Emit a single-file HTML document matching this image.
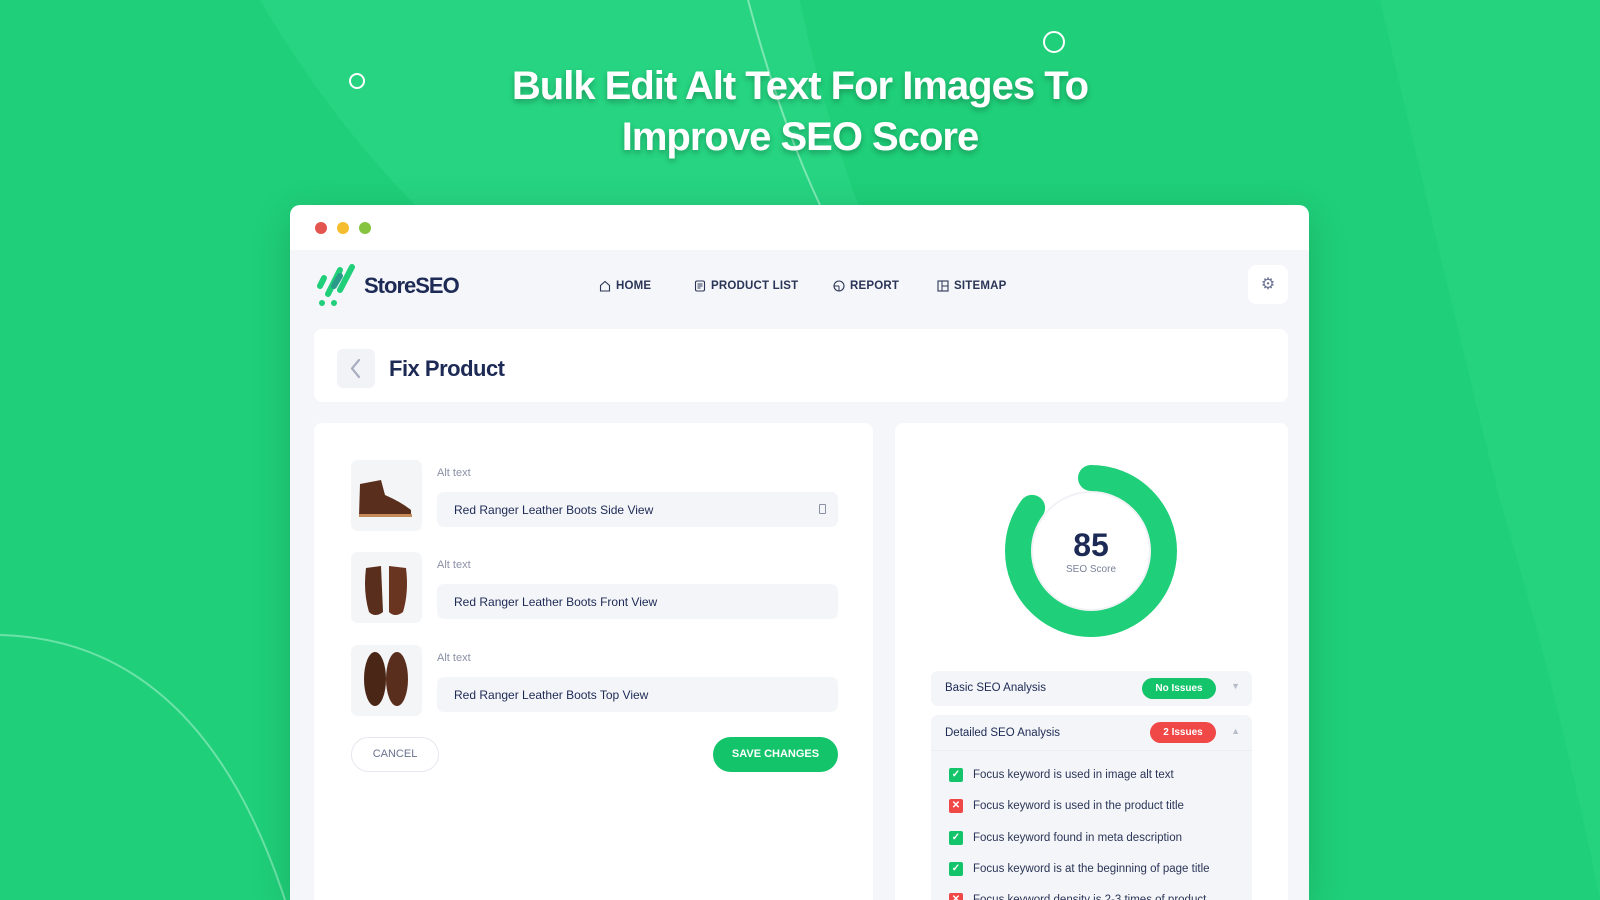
<!DOCTYPE html>
<html><head><meta charset="utf-8"><style>
*{margin:0;padding:0;box-sizing:border-box}
html,body{width:1600px;height:900px;overflow:hidden}
body{position:relative;background:#1fcf79;font-family:"Liberation Sans",sans-serif;color:#1d2a55}
.abs{position:absolute}
h1{position:absolute;left:0;width:1600px;top:61px;text-align:center;color:#fff;font-size:40px;line-height:51px;font-weight:bold;text-shadow:0 3px 6px rgba(0,0,0,.25);letter-spacing:-1px}
.win{position:absolute;left:290px;top:205px;width:1019px;height:695px;background:#fff;border-radius:10px 10px 0 0;box-shadow:0 10px 40px rgba(0,0,0,.15)}
.inner{position:absolute;left:290px;top:250px;width:1019px;height:650px;background:#f5f6f9}
.dot{position:absolute;width:12px;height:12px;border-radius:50%;top:222px}
.nav{position:absolute;top:279px;height:14px;line-height:14px;font-size:11.5px;font-weight:bold;color:#2a3557;letter-spacing:.2px;display:flex;align-items:center;gap:5px}
.nav svg{flex:none}
.card{position:absolute;background:#fff;border-radius:8px}
.lbl{position:absolute;left:437px;font-size:11px;color:#8a90a6}
.inp{position:absolute;left:437px;width:401px;height:35px;background:#f4f5f8;border-radius:7px;font-size:12px;padding:11px 17px;color:#1d2a55}
.th{position:absolute;left:351px;width:71px;height:71px;background:#f4f5f7;border-radius:7px}
.row{position:absolute;left:931px;width:321px;background:#f4f5f8;border-radius:7px;font-size:11.5px}
.badge{position:absolute;right:36px;top:7px;height:21px;border-radius:11px;color:#fff;font-size:10px;font-weight:bold;text-align:center;line-height:21px}
.it{position:absolute;left:949px;font-size:11.5px;color:#2a3557;white-space:nowrap}
.cb{display:inline-block;width:14px;height:14px;border-radius:2px;vertical-align:middle;margin-right:10px;color:#fff;font-size:10px;text-align:center;line-height:14px;font-weight:bold}
</style></head><body>
<svg class="abs" style="left:0;top:0" width="1600" height="900">
<path d="M260 0 Q330 120 420 210 L860 210 Q820 100 800 0Z" fill="#2ad684" opacity=".7"/>
<path d="M1380 0 Q1450 300 1500 500 Q1560 700 1600 900 L1600 0Z" fill="#2ad684" opacity=".6"/>
<path d="M0 635 Q200 640 285 900" stroke="#9ff0c7" stroke-width="2" fill="none" opacity=".6"/>
<path d="M748 0 Q780 120 820 205" stroke="#9ff0c7" stroke-width="2" fill="none" opacity=".7"/>
<circle cx="357" cy="81" r="7" stroke="#fff" stroke-width="2" fill="none"/>
<circle cx="1054" cy="42" r="10" stroke="#fff" stroke-width="2" fill="none"/>
</svg>
<h1>Bulk Edit Alt Text For Images To<br>Improve SEO Score</h1>
<div class="win"></div>
<div class="inner"></div>
<div class="dot" style="left:315px;background:#e5554f"></div>
<div class="dot" style="left:337px;background:#f5bd2e"></div>
<div class="dot" style="left:359px;background:#86c440"></div>
<svg class="abs" style="left:314px;top:264px" width="48" height="44"><g stroke-linecap="round" stroke-width="6"><line x1="6" y1="22" x2="10" y2="14" stroke="#1fcf79"/><line x1="14" y1="30" x2="26" y2="6" stroke="#1fcf79"/><line x1="26" y1="26" x2="38" y2="3" stroke="#1fcf79"/><line x1="20" y1="22" x2="26" y2="12" stroke="#2a9a8a"/></g><circle cx="8" cy="39" r="3" fill="#1fcf79"/><circle cx="20" cy="39" r="3" fill="#1fcf79"/></svg>
<div class="abs" style="left:364px;top:273px;font-size:22px;font-weight:bold;color:#1d2a55;letter-spacing:-1px">StoreSEO</div>
<div class="nav" style="left:599px"><svg width="12" height="12"><path d="M1.5 11V5.5L6 1.5l4.5 4V11z" fill="none" stroke="#2a3557" stroke-width="1.1"/></svg>HOME</div>
<div class="nav" style="left:694px"><svg width="12" height="12"><rect x="1.5" y="1" width="9" height="10" rx="1.5" fill="none" stroke="#2a3557" stroke-width="1.1"/><path d="M3.5 4h5M3.5 6h5M3.5 8h3" stroke="#2a3557"/></svg>PRODUCT LIST</div>
<div class="nav" style="left:833px"><svg width="12" height="12"><circle cx="6" cy="6" r="5" fill="none" stroke="#2a3557" stroke-width="1.1"/><path d="M6 6V11M6 6H1" stroke="#2a3557"/></svg>REPORT</div>
<div class="nav" style="left:937px"><svg width="12" height="12"><rect x="1" y="1" width="10" height="10" fill="none" stroke="#2a3557" stroke-width="1.1"/><path d="M5 1V11M5 6H11" stroke="#2a3557"/></svg>SITEMAP</div>
<div class="card" style="left:1248px;top:265px;width:40px;height:39px;text-align:center;line-height:39px;color:#6b7290;font-size:16px">⚙</div>
<div class="card" style="left:314px;top:329px;width:974px;height:73px"></div>
<div class="abs" style="left:337px;top:349px;width:38px;height:39px;background:#f2f3f7;border-radius:6px"><svg width="38" height="39"><path d="M22 11l-7 8.5 7 8.5" fill="none" stroke="#a8adc0" stroke-width="2.2" stroke-linecap="round"/></svg></div>
<div class="abs" style="left:389px;top:356px;font-size:22px;font-weight:bold;color:#1d2a55;letter-spacing:-.5px">Fix Product</div>
<div class="card" style="left:314px;top:423px;width:559px;height:477px;border-radius:8px 8px 0 0"></div>
<div class="card" style="left:895px;top:423px;width:393px;height:477px;border-radius:8px 8px 0 0"></div>
<div class="th" style="top:460px"><svg width="71" height="71"><path d="M9 24 L30 20 L34 35 Q50 42 60 50 L60 56 L8 56 Z" fill="#5a2e1c"/><rect x="8" y="54" width="53" height="3" fill="#c48a5a"/></svg></div>
<div class="th" style="top:552px"><svg width="71" height="71"><path d="M15 16 L30 14 L32 60 Q24 66 18 60 Q12 40 15 16Z" fill="#5a2e1c"/><path d="M38 14 L55 16 Q58 40 52 60 Q44 66 38 60Z" fill="#6a3520"/></svg></div>
<div class="th" style="top:645px"><svg width="71" height="71"><ellipse cx="24" cy="34" rx="11" ry="27" fill="#4a2616"/><ellipse cx="46" cy="34" rx="11" ry="27" fill="#5a2e1c"/></svg></div>
<div class="lbl" style="top:467px">Alt text</div>
<div class="inp" style="top:492px">Red Ranger Leather Boots Side View<span style="position:absolute;right:12px;top:12px;width:7px;height:10px;border:1px solid #8a90a6;border-radius:1px"></span></div>
<div class="lbl" style="top:559px">Alt text</div>
<div class="inp" style="top:584px">Red Ranger Leather Boots Front View</div>
<div class="lbl" style="top:652px">Alt text</div>
<div class="inp" style="top:677px">Red Ranger Leather Boots Top View</div>
<div class="abs" style="left:351px;top:737px;width:88px;height:35px;border:1.5px solid #e6e8ef;border-radius:18px;font-size:11px;color:#6b7290;text-align:center;line-height:32px">CANCEL</div>
<div class="abs" style="left:713px;top:737px;width:125px;height:35px;background:#14c46a;border-radius:18px;font-size:11px;color:#fff;font-weight:bold;text-align:center;line-height:35px">SAVE CHANGES</div>
<svg class="abs" style="left:1001px;top:461px" width="180" height="180"><circle cx="90" cy="90" r="86" fill="#f1f2f6"/><circle cx="90" cy="90" r="73" fill="none" stroke="#fff" stroke-width="26"/><circle cx="90" cy="90" r="73" fill="none" stroke="#1fcf79" stroke-width="26" stroke-linecap="round" stroke-dasharray="390 459" transform="rotate(-90 90 90)"/><circle cx="90" cy="90" r="58" fill="#fff"/></svg>
<div class="abs" style="left:1041px;top:527px;width:100px;text-align:center;font-size:32px;font-weight:bold;color:#1d2a55">85</div>
<div class="abs" style="left:1041px;top:564px;width:100px;text-align:center;font-size:10px;color:#7a8199">SEO Score</div>
<div class="row" style="top:671px;height:35px"><span class="abs" style="left:14px;top:11px">Basic SEO Analysis</span><span class="badge" style="width:74px;background:#14c46a">No Issues</span><span class="abs" style="right:12px;top:10px;color:#b8bdcc;font-size:9px">▼</span></div>
<div class="row" style="top:715px;height:185px;border-radius:7px 7px 0 0"><span class="abs" style="left:14px;top:12px">Detailed SEO Analysis</span><span class="badge" style="width:66px;background:#f04747">2 Issues</span><span class="abs" style="right:12px;top:11px;color:#b8bdcc;font-size:9px">▲</span><div style="position:absolute;left:0;right:0;top:35px;border-top:1px solid #eceef3"></div></div>
<div class="it" style="top:768px"><span class="cb" style="background:#14c46a">✓</span>Focus keyword is used in image alt text</div>
<div class="it" style="top:799px"><span class="cb" style="background:#f04747">✕</span>Focus keyword is used in the product title</div>
<div class="it" style="top:831px"><span class="cb" style="background:#14c46a">✓</span>Focus keyword found in meta description</div>
<div class="it" style="top:862px"><span class="cb" style="background:#14c46a">✓</span>Focus keyword is at the beginning of page title</div>
<div class="abs" style="left:0;top:893px;width:1600px;height:7px;overflow:hidden"><div class="it" style="top:0"><span class="cb" style="background:#f04747">✕</span>Focus keyword density is 2-3 times of product</div></div>
</body></html>
